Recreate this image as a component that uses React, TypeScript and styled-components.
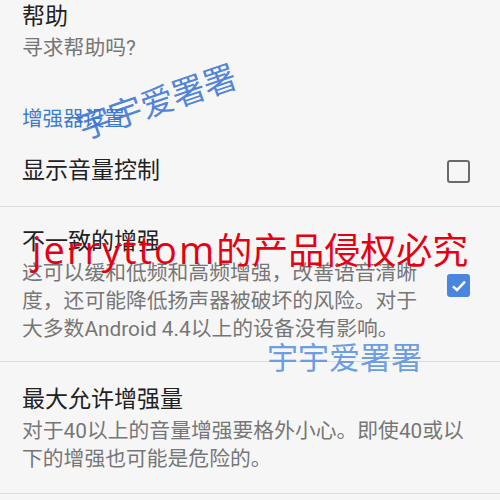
import React from "react";
import styled, { createGlobalStyle } from "styled-components";

const GlobalStyle = createGlobalStyle`
  html, body {
    margin: 0;
    padding: 0;
    background: #f6f6f6;
  }
  body {
    font-family: Roboto, "Noto Sans CJK SC", sans-serif;
  }
`;

const Screen = styled.div`
  position: relative;
  width: 500px;
  height: 500px;
  overflow: hidden;
  background: #f6f6f6;
`;

const Item = styled.div<{ $top: number; $bottom: number; $divider?: boolean }>`
  display: flex;
  align-items: center;
  gap: 24px;
  padding: ${(p) => p.$top}px 30px ${(p) => p.$bottom}px 22px;
  border-bottom: ${(p) => (p.$divider ? "1px solid #dcdcdc" : "none")};
`;

const TextCol = styled.div`
  flex: 1;
  min-width: 0;
`;

const Title = styled.div`
  font-size: 23px;
  line-height: 28px;
  color: #212121;
`;

const Desc = styled.div`
  margin-top: 3px;
  font-size: 20.8px;
  line-height: 28px;
  color: #767676;
`;

const SectionHeader = styled.div`
  margin-top: 43px;
  padding-left: 22px;
  font-size: 20.6px;
  line-height: 28px;
  color: #3d7bd0;
`;

const Box = styled.div<{ $checked?: boolean }>`
  flex: none;
  width: 23px;
  height: 23px;
  box-sizing: border-box;
  border-radius: 3px;
  display: flex;
  align-items: center;
  justify-content: center;
  background: ${(p) => (p.$checked ? "#4a86e0" : "transparent")};
  border: ${(p) => (p.$checked ? "none" : "2.5px solid #6a6a6a")};
`;

const Mark = styled.div<{ $top: number; $left: number; $size: number; $color: string; $rotate?: number }>`
  position: absolute;
  top: ${(p) => p.$top}px;
  left: ${(p) => p.$left}px;
  font-family: "Noto Sans CJK SC", sans-serif;
  font-size: ${(p) => p.$size}px;
  line-height: 1.1;
  white-space: nowrap;
  color: ${(p) => p.$color};
  transform: rotate(${(p) => p.$rotate ?? 0}deg);
  transform-origin: center;
  pointer-events: none;
`;

const Latin = styled.span`
  font-family: "Open Sans", sans-serif;
  font-size: 38px;
  letter-spacing: 2px;
`;

function Checkbox({ checked }: { checked?: boolean }) {
  return (
    <Box $checked={checked}>
      {checked && (
        <svg width="18" height="18" viewBox="0 0 18 18">
          <path d="M3 9.3 L7 13 L15 4.6" fill="none" stroke="#fff" strokeWidth="2.5" />
        </svg>
      )}
    </Box>
  );
}

export default function App() {
  return (
    <Screen>
      <GlobalStyle />
      <Item $top={3} $bottom={0}>
        <TextCol>
          <Title>帮助</Title>
          <Desc>寻求帮助吗?</Desc>
        </TextCol>
      </Item>
      <SectionHeader>增强器设置</SectionHeader>
      <Item $top={24} $bottom={21} $divider>
        <TextCol>
          <Title>显示音量控制</Title>
        </TextCol>
        <Checkbox />
      </Item>
      <Item $top={21} $bottom={18} $divider>
        <TextCol>
          <Title>不一致的增强</Title>
          <Desc>
            这可以缓和低频和高频增强，改善语音清晰度，还可能降低扬声器被破坏的风险。对于大多数Android 4.4以上的设备没有影响。
          </Desc>
        </TextCol>
        <Checkbox checked />
      </Item>
      <Item $top={24} $bottom={20} $divider>
        <TextCol>
          <Title>最大允许增强量</Title>
          <Desc>对于40以上的音量增强要格外小心。即使40或以下的增强也可能是危险的。</Desc>
        </TextCol>
      </Item>

      <Mark $top={82} $left={74} $size={33} $color="rgba(58,116,214,0.9)" $rotate={-19}>
        宇宇爱署署
      </Mark>
      <Mark $top={229} $left={32} $size={36} $color="#e60012">
        <Latin>jerryttom</Latin>的产品侵权必究
      </Mark>
      <Mark $top={339} $left={267} $size={31} $color="rgba(90,145,224,0.9)">
        宇宇爱署署
      </Mark>
    </Screen>
  );
}
